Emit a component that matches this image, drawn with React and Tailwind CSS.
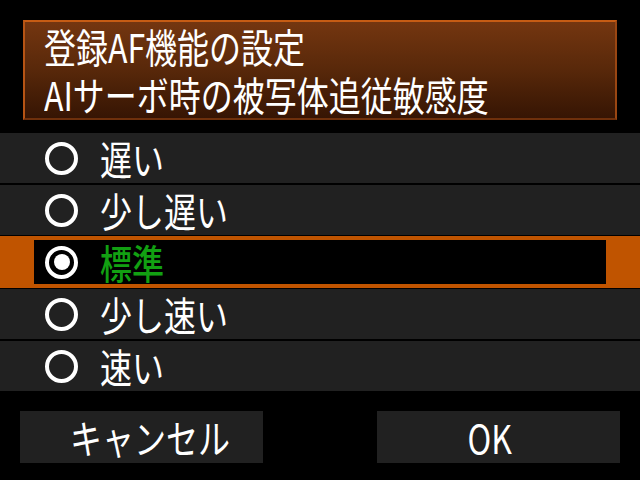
import React, { useState } from 'react';

const options = ['遅い', '少し遅い', '標準', '少し速い', '速い'];

function Radio({ on }) {
  return (
    <div className="w-[33px] h-[33px] rounded-full border-[4px] border-white flex items-center justify-center shrink-0">
      {on && <div className="w-[16px] h-[16px] rounded-full bg-white" />}
    </div>
  );
}

function Label({ children, className = '' }) {
  return (
    <span className={`inline-block origin-left scale-x-[0.8] text-[40px] leading-none whitespace-nowrap ${className}`}>
      {children}
    </span>
  );
}

export default function App() {
  const [selected, setSelected] = useState(2);

  return (
    <div className="w-[640px] h-[480px] bg-black overflow-hidden font-['Noto_Sans_CJK_JP','Noto_Sans',sans-serif] text-white">
      {/* Title */}
      <div className="mx-[23px] mt-[20px] h-[100px] border-2 border-t-[#c65c14] border-l-[#b65414] border-r-[#9a4612] border-b-[#6e300c] bg-gradient-to-b from-[#743610] via-[#58280a] to-[#361504] flex flex-col justify-center pl-[19px]">
        <div className="h-[48px] flex items-center"><Label>登録AF機能の設定</Label></div>
        <div className="h-[48px] flex items-center"><Label>AIサーボ時の被写体追従敏感度</Label></div>
      </div>

      {/* Options */}
      <div className="mt-[13px] flex flex-col gap-[2px]">
        {options.map((opt, i) =>
          i === selected ? (
            <div key={opt} className="h-[52px] -my-[1px] bg-[#c05400] px-[34px] py-[4px]" onClick={() => setSelected(i)}>
              <div className="h-full bg-black flex items-center pl-[11px] gap-[22px]">
                <Radio on />
                <Label className="text-[#12a012] font-medium">{opt}</Label>
              </div>
            </div>
          ) : (
            <div key={opt} className="h-[50px] bg-[#212121] flex items-center pl-[45px] gap-[22px]" onClick={() => setSelected(i)}>
              <Radio />
              <Label>{opt}</Label>
            </div>
          )
        )}
      </div>

      {/* Buttons */}
      <div className="mt-[20px] px-[20px] flex justify-between">
        <button className="w-[243px] h-[52px] bg-[#212121] flex items-center justify-center pl-[16px]">
          <span className="inline-block scale-x-[0.8] text-[40px] leading-none">キャンセル</span>
        </button>
        <button className="w-[243px] h-[52px] bg-[#212121] flex items-center justify-center pr-[18px]">
          <span className="inline-block scale-x-[0.8] text-[40px] leading-none">OK</span>
        </button>
      </div>
    </div>
  );
}
